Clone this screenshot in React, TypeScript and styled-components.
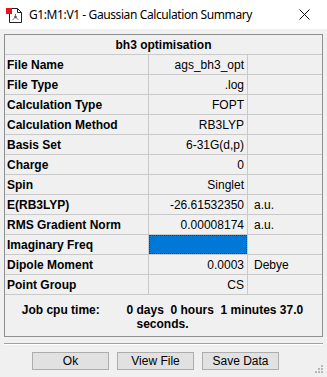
import React from 'react';
import styled, { createGlobalStyle } from 'styled-components';

const GlobalStyle = createGlobalStyle`
  html, body {
    margin: 0;
    padding: 0;
    background: #f0f0f0;
  }
`;

const Window = styled.div`
  width: 327px;
  height: 377px;
  background: #f0f0f0;
  font-family: 'Liberation Sans', Arial, sans-serif;
  color: #000;
  display: flex;
  flex-direction: column;
  overflow: hidden;
  position: relative;
`;

const TitleBar = styled.div`
  height: 29px;
  background: #ffffff;
  display: flex;
  align-items: center;
  padding: 0 0 0 6px;
  flex-shrink: 0;
`;

const TitleText = styled.span`
  font-family: 'Noto Sans', 'Open Sans', sans-serif;
  font-size: 12px;
  letter-spacing: -0.4px;
  margin-left: 6px;
  flex: 1;
  white-space: nowrap;
`;

const CloseButton = styled.div`
  width: 46px;
  height: 29px;
  display: flex;
  align-items: center;
  justify-content: center;
`;

const Body = styled.div`
  padding: 5px 4px 0 4px;
  display: flex;
  flex-direction: column;
`;

const SummaryBox = styled.div`
  width: 317px;
  border: 1px solid #8e8f8f;
  display: flex;
  flex-direction: column;
`;

const Header = styled.div`
  height: 19px;
  border-bottom: 1px solid #c9c9c9;
  display: flex;
  align-items: center;
  justify-content: center;
  font-weight: bold;
  font-size: 12px;
`;

const Grid = styled.div`
  display: grid;
  grid-template-columns: 144px 99px 74px;
  grid-auto-rows: 20px;
`;

const Cell = styled.div<{ $align?: 'left' | 'right'; $bold?: boolean; $last?: boolean }>`
  box-sizing: border-box;
  border-bottom: 1px solid #c9c9c9;
  border-right: ${p => (p.$last ? 'none' : '1px solid #c9c9c9')};
  display: flex;
  align-items: center;
  justify-content: ${p => (p.$align === 'right' ? 'flex-end' : 'flex-start')};
  padding: ${p => (p.$align === 'right' ? '0 3px 0 0' : '0 0 0 2px')};
  font-size: 12px;
  font-weight: ${p => (p.$bold ? 'bold' : 'normal')};
  white-space: nowrap;
  overflow: hidden;
`;

const UnitCell = styled(Cell)`
  padding-left: 6px;
`;

const SelectedCell = styled.div`
  box-sizing: border-box;
  border-bottom: 1px solid #c9c9c9;
  border-right: 1px solid #c9c9c9;
  padding: 0;
  display: flex;
`;

const SelectedFill = styled.div`
  flex: 1;
  background: #0078d7;
  outline: 1px dotted #4a3a20;
  outline-offset: -1px;
`;

const JobTime = styled.div`
  height: 41px;
  box-sizing: border-box;
  padding: 2px 13px 0 11px;
  display: flex;
  align-items: center;
  justify-content: center;
  text-align: center;
  white-space: pre-wrap;
  font-weight: bold;
  font-size: 12px;
  line-height: 14px;
`;

const Separator = styled.div`
  width: 319px;
  height: 1px;
  margin-top: 6px;
  background: #a0a0a0;
  border-bottom: 1px solid #ffffff;
`;

const ButtonRow = styled.div`
  display: flex;
  gap: 8px;
  padding: 7px 0 0 28px;
`;

const Button = styled.button`
  width: 77px;
  height: 18px;
  box-sizing: border-box;
  padding: 0;
  background: #e1e1e1;
  border: 1px solid #adadad;
  font-family: 'Liberation Sans', Arial, sans-serif;
  font-size: 12px;
  color: #000;
  display: flex;
  align-items: center;
  justify-content: center;
`;

const Grip = styled.svg`
  position: absolute;
  right: 4px;
  bottom: 4px;
`;

const rows: { label: string; value: string; unit?: string; selected?: boolean }[] = [
  { label: 'File Name', value: 'ags_bh3_opt' },
  { label: 'File Type', value: '.log' },
  { label: 'Calculation Type', value: 'FOPT' },
  { label: 'Calculation Method', value: 'RB3LYP' },
  { label: 'Basis Set', value: '6-31G(d,p)' },
  { label: 'Charge', value: '0' },
  { label: 'Spin', value: 'Singlet' },
  { label: 'E(RB3LYP)', value: '-26.61532350', unit: 'a.u.' },
  { label: 'RMS Gradient Norm', value: '0.00008174', unit: 'a.u.' },
  { label: 'Imaginary Freq', value: '', selected: true },
  { label: 'Dipole Moment', value: '0.0003', unit: 'Debye' },
  { label: 'Point Group', value: 'CS' },
];

const AppIcon = () => (
  <svg width="17" height="17" viewBox="0 0 17 17">
    <path d="M3.5 2.5 H11.5 L15.5 6.5 V16.5 H3.5 Z" fill="#fff" stroke="#222" />
    <path d="M11.5 2.5 V6.5 H15.5" fill="none" stroke="#222" />
    <line x1="9.5" y1="8" x2="9.5" y2="11" stroke="#777" />
    <line x1="9.5" y1="11" x2="6.5" y2="14" stroke="#777" />
    <line x1="9.5" y1="11" x2="12.5" y2="14" stroke="#777" />
    <circle cx="9.5" cy="11" r="1.3" fill="#555" />
    <rect x="0" y="2" width="6" height="6" fill="#e8131b" />
  </svg>
);

export default function App() {
  return (
    <Window>
      <GlobalStyle />
      <TitleBar>
        <AppIcon />
        <TitleText>G1:M1:V1 - Gaussian Calculation Summary</TitleText>
        <CloseButton>
          <svg width="11" height="11" viewBox="0 0 11 11">
            <path d="M0.5 0.5 L10.5 10.5 M10.5 0.5 L0.5 10.5" stroke="#111" strokeWidth="1" />
          </svg>
        </CloseButton>
      </TitleBar>
      <Body>
        <SummaryBox>
          <Header>bh3 optimisation</Header>
          <Grid>
            {rows.map(r => (
              <React.Fragment key={r.label}>
                <Cell $bold>{r.label}</Cell>
                {r.selected ? (
                  <SelectedCell>
                    <SelectedFill />
                  </SelectedCell>
                ) : (
                  <Cell $align="right">{r.value}</Cell>
                )}
                <UnitCell $last>{r.unit ?? ''}</UnitCell>
              </React.Fragment>
            ))}
          </Grid>
          <JobTime>{'Job cpu time:        0 days  0 hours  1 minutes 37.0 seconds.'}</JobTime>
        </SummaryBox>
        <Separator />
        <ButtonRow>
          <Button>Ok</Button>
          <Button>View File</Button>
          <Button>Save Data</Button>
        </ButtonRow>
      </Body>
      <Grip width="8" height="8" viewBox="0 0 8 8">
        {[
          [6, 0],
          [6, 3],
          [3, 3],
          [6, 6],
          [3, 6],
          [0, 6],
        ].map(([x, y]) => (
          <rect key={`${x}-${y}`} x={x} y={y} width="2" height="2" fill="#b8b8b8" />
        ))}
      </Grip>
    </Window>
  );
}
